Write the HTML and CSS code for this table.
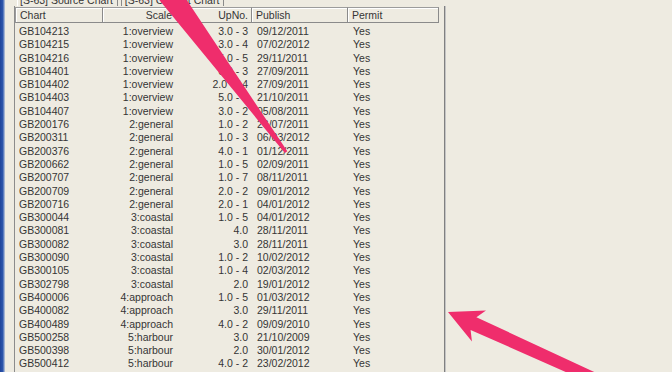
FILE: index.html
```html
<!DOCTYPE html>
<html>
<head>
<meta charset="utf-8">
<link rel="stylesheet" href="styles.css">
</head>
<body>
<div class="screen">
  <div class="frame-edge"></div>
  <div class="pane">
    <div class="tabs">
      <span class="tab">[S-63] Source Chart</span>
      <span class="tab tab-second">[S-63] Current Chart</span>
    </div>
    <div class="list">
      <div class="list-head">
        <div class="hcell first">Chart</div>
        <div class="hcell right">Scale</div>
        <div class="hcell right upno">UpNo.</div>
        <div class="hcell">Publish</div>
        <div class="hcell">Permit</div>
      </div>
      <div class="list-body">
        <div class="row"><span class="c-chart">GB104213</span><span class="c-scale">1:overview</span><span class="c-upno">3.0 - 3</span><span class="c-pub">09/12/2011</span><span class="c-perm">Yes</span></div>
        <div class="row"><span class="c-chart">GB104215</span><span class="c-scale">1:overview</span><span class="c-upno">3.0 - 4</span><span class="c-pub">07/02/2012</span><span class="c-perm">Yes</span></div>
        <div class="row"><span class="c-chart">GB104216</span><span class="c-scale">1:overview</span><span class="c-upno">5.0 - 5</span><span class="c-pub">29/11/2011</span><span class="c-perm">Yes</span></div>
        <div class="row"><span class="c-chart">GB104401</span><span class="c-scale">1:overview</span><span class="c-upno">6.0 - 3</span><span class="c-pub">27/09/2011</span><span class="c-perm">Yes</span></div>
        <div class="row"><span class="c-chart">GB104402</span><span class="c-scale">1:overview</span><span class="c-upno">2.0 - 14</span><span class="c-pub">27/09/2011</span><span class="c-perm">Yes</span></div>
        <div class="row"><span class="c-chart">GB104403</span><span class="c-scale">1:overview</span><span class="c-upno">5.0 - 2</span><span class="c-pub">21/10/2011</span><span class="c-perm">Yes</span></div>
        <div class="row"><span class="c-chart">GB104407</span><span class="c-scale">1:overview</span><span class="c-upno">3.0 - 2</span><span class="c-pub">05/08/2011</span><span class="c-perm">Yes</span></div>
        <div class="row"><span class="c-chart">GB200176</span><span class="c-scale">2:general</span><span class="c-upno">1.0 - 2</span><span class="c-pub">26/07/2011</span><span class="c-perm">Yes</span></div>
        <div class="row"><span class="c-chart">GB200311</span><span class="c-scale">2:general</span><span class="c-upno">1.0 - 3</span><span class="c-pub">06/03/2012</span><span class="c-perm">Yes</span></div>
        <div class="row"><span class="c-chart">GB200376</span><span class="c-scale">2:general</span><span class="c-upno">4.0 - 1</span><span class="c-pub">01/12/2011</span><span class="c-perm">Yes</span></div>
        <div class="row"><span class="c-chart">GB200662</span><span class="c-scale">2:general</span><span class="c-upno">1.0 - 5</span><span class="c-pub">02/09/2011</span><span class="c-perm">Yes</span></div>
        <div class="row"><span class="c-chart">GB200707</span><span class="c-scale">2:general</span><span class="c-upno">1.0 - 7</span><span class="c-pub">08/11/2011</span><span class="c-perm">Yes</span></div>
        <div class="row"><span class="c-chart">GB200709</span><span class="c-scale">2:general</span><span class="c-upno">2.0 - 2</span><span class="c-pub">09/01/2012</span><span class="c-perm">Yes</span></div>
        <div class="row"><span class="c-chart">GB200716</span><span class="c-scale">2:general</span><span class="c-upno">2.0 - 1</span><span class="c-pub">04/01/2012</span><span class="c-perm">Yes</span></div>
        <div class="row"><span class="c-chart">GB300044</span><span class="c-scale">3:coastal</span><span class="c-upno">1.0 - 5</span><span class="c-pub">04/01/2012</span><span class="c-perm">Yes</span></div>
        <div class="row"><span class="c-chart">GB300081</span><span class="c-scale">3:coastal</span><span class="c-upno">4.0</span><span class="c-pub">28/11/2011</span><span class="c-perm">Yes</span></div>
        <div class="row"><span class="c-chart">GB300082</span><span class="c-scale">3:coastal</span><span class="c-upno">3.0</span><span class="c-pub">28/11/2011</span><span class="c-perm">Yes</span></div>
        <div class="row"><span class="c-chart">GB300090</span><span class="c-scale">3:coastal</span><span class="c-upno">1.0 - 2</span><span class="c-pub">10/02/2012</span><span class="c-perm">Yes</span></div>
        <div class="row"><span class="c-chart">GB300105</span><span class="c-scale">3:coastal</span><span class="c-upno">1.0 - 4</span><span class="c-pub">02/03/2012</span><span class="c-perm">Yes</span></div>
        <div class="row"><span class="c-chart">GB302798</span><span class="c-scale">3:coastal</span><span class="c-upno">2.0</span><span class="c-pub">19/01/2012</span><span class="c-perm">Yes</span></div>
        <div class="row"><span class="c-chart">GB400006</span><span class="c-scale">4:approach</span><span class="c-upno">1.0 - 5</span><span class="c-pub">01/03/2012</span><span class="c-perm">Yes</span></div>
        <div class="row"><span class="c-chart">GB400082</span><span class="c-scale">4:approach</span><span class="c-upno">3.0</span><span class="c-pub">29/11/2011</span><span class="c-perm">Yes</span></div>
        <div class="row"><span class="c-chart">GB400489</span><span class="c-scale">4:approach</span><span class="c-upno">4.0 - 2</span><span class="c-pub">09/09/2010</span><span class="c-perm">Yes</span></div>
        <div class="row"><span class="c-chart">GB500258</span><span class="c-scale">5:harbour</span><span class="c-upno">3.0</span><span class="c-pub">21/10/2009</span><span class="c-perm">Yes</span></div>
        <div class="row"><span class="c-chart">GB500398</span><span class="c-scale">5:harbour</span><span class="c-upno">2.0</span><span class="c-pub">30/01/2012</span><span class="c-perm">Yes</span></div>
        <div class="row"><span class="c-chart">GB500412</span><span class="c-scale">5:harbour</span><span class="c-upno">4.0 - 2</span><span class="c-pub">23/02/2012</span><span class="c-perm">Yes</span></div>
      </div>
    </div>
  </div>
  <svg class="annot" width="672" height="372" viewBox="0 0 672 372">
    <polygon class="arrow" transform="translate(138 -48) rotate(53.5)" points="0,0 45,-22 40,-12 249,-1.5 249,1.5 40,12 45,22"/>
    <polygon class="arrow" transform="translate(448 312) rotate(24.4)" points="0,0 34,-17 28,-7 240,-5 240,5 28,7 34,17"/>
  </svg>
</div>
</body>
</html>
```
FILE: styles.css
```css
html, body {
  margin: 0;
  padding: 0;
  background: #eeebe1;
}

.screen {
  position: relative;
  display: flex;
  width: 672px;
  height: 372px;
  overflow: hidden;
  background: #eeebe1;
  font-family: "Liberation Sans", Arial, sans-serif;
  font-size: 10.5px;
  color: #353535;
}

.frame-edge {
  width: 5px;
  flex: none;
  background: linear-gradient(to right, #20449a 0, #2d56ac 55%, #7f98c8 80%, #c9d0dc 100%);
}

.pane {
  flex: 1;
  display: flex;
  flex-direction: column;
  padding-left: 9px;
}

.tabs {
  height: 6px;
  flex: none;
  overflow: hidden;
  display: flex;
  align-items: flex-end;
  padding-left: 3px;
  gap: 3px;
}

.tab {
  line-height: 11px;
  padding: 0 4px 0 2px;
  border-left: 1px solid #ffffff;
  border-right: 1px solid #8a8a8a;
  white-space: nowrap;
}

.tab-second {
  border-left: 1px solid #8a8a8a;
  padding-left: 3px;
}

.list {
  width: 431px;
  flex: 1;
  box-sizing: border-box;
  border-left: 1px solid #8c8c8c;
  border-right: 1px solid #808080;
  box-shadow: 1px 0 0 #c4c4c4;
  padding-top: 1px;
}

.list-head,
.row {
  display: grid;
  grid-template-columns: 88px 77px 72px 96px 91px;
}

.hcell {
  height: 16px;
  box-sizing: border-box;
  line-height: 14px;
  padding-left: 4px;
  border-top: 1px solid #9c9c9c;
  border-bottom: 1px solid #8a8a8a;
  border-right: 1px solid #8a8a8a;
  box-shadow: inset 1px 1px 0 #ffffff;
  white-space: nowrap;
}

.hcell.first {
  border-left: 1px solid #9c9c9c;
}

.hcell.right {
  text-align: right;
  padding-left: 0;
  padding-right: 7px;
}

.hcell.upno {
  padding-right: 3px;
}

.list-body {
  padding-top: 2px;
}

.row {
  height: 13.3px;
  line-height: 13.3px;
  white-space: nowrap;
}

.c-chart {
  padding-left: 4px;
}

.c-scale {
  text-align: right;
  padding-right: 7px;
}

.c-upno {
  text-align: right;
  padding-right: 4px;
}

.c-pub,
.c-perm {
  padding-left: 5px;
}

.annot {
  position: absolute;
  left: 0;
  top: 0;
  pointer-events: none;
}

.arrow {
  fill: #ef2d6c;
}
```
